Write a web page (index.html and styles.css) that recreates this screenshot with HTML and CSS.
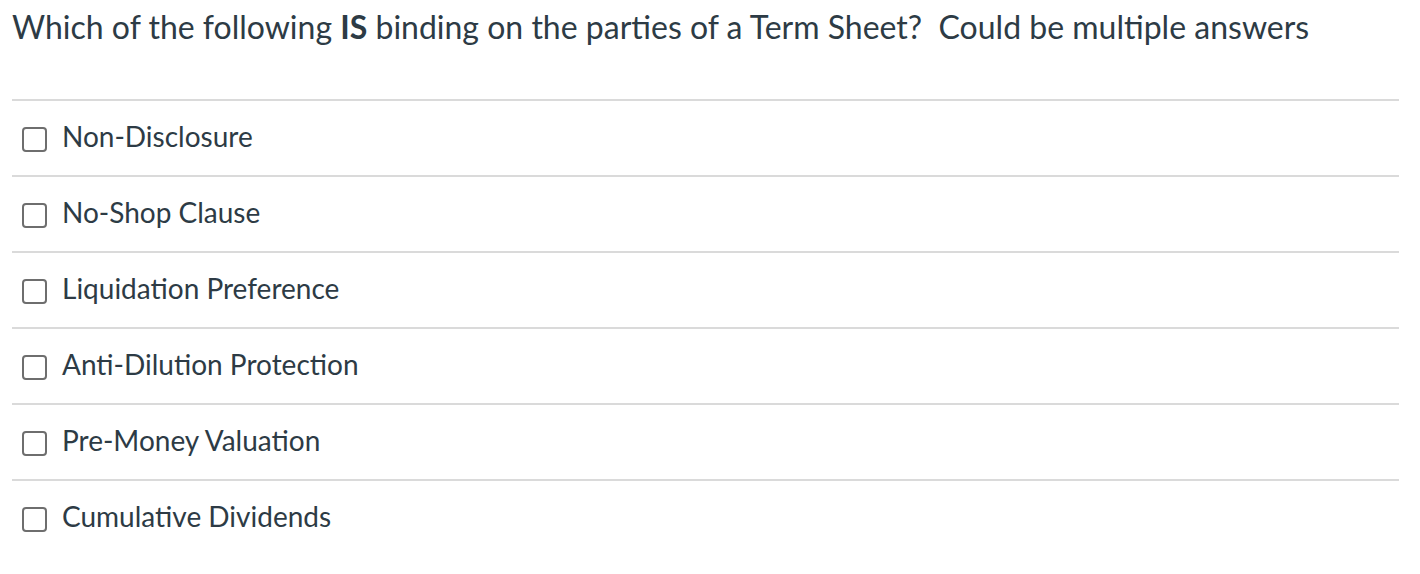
FILE: index.html
```html
<!DOCTYPE html>
<html lang="en">
<head>
<meta charset="utf-8">
<link rel="stylesheet" href="styles.css">
</head>
<body>
<div class="question">
  <div class="question-text">Which of the following <strong>IS</strong> binding on the parties of a Term Sheet?&nbsp; Could be multiple answers</div>
  <div class="answers">
    <label class="answer"><span class="box"></span><span class="label">Non-Disclosure</span></label>
    <label class="answer"><span class="box"></span><span class="label">No-Shop Clause</span></label>
    <label class="answer"><span class="box"></span><span class="label">Liquidation Preference</span></label>
    <label class="answer"><span class="box"></span><span class="label">Anti-Dilution Protection</span></label>
    <label class="answer"><span class="box"></span><span class="label">Pre-Money Valuation</span></label>
    <label class="answer"><span class="box"></span><span class="label">Cumulative Dividends</span></label>
  </div>
</div>
</body>
</html>
```
FILE: styles.css
```css
html, body {
  margin: 0;
  padding: 0;
  background: #ffffff;
}
body {
  font-family: Lato, "Liberation Sans", sans-serif;
  color: #2d3b45;
}
.question {
  padding: 8px 21px 0 12px;
}
.question-text {
  font-size: 32px;
  line-height: 38px;
  height: 91px;
}
.question-text strong {
  font-weight: 700;
}
.answers {
  display: flex;
  flex-direction: column;
}
.answer {
  display: flex;
  align-items: center;
  height: 74px;
  border-top: 2px solid #dadada;
  padding-left: 10px;
}
.box {
  width: 21px;
  height: 21px;
  margin-top: 2px;
  border: 2px solid #6e6e6e;
  border-radius: 4px;
  flex: none;
}
.label {
  margin-left: 15px;
  margin-bottom: 5px;
  font-size: 28px;
  line-height: 34px;
}
```
